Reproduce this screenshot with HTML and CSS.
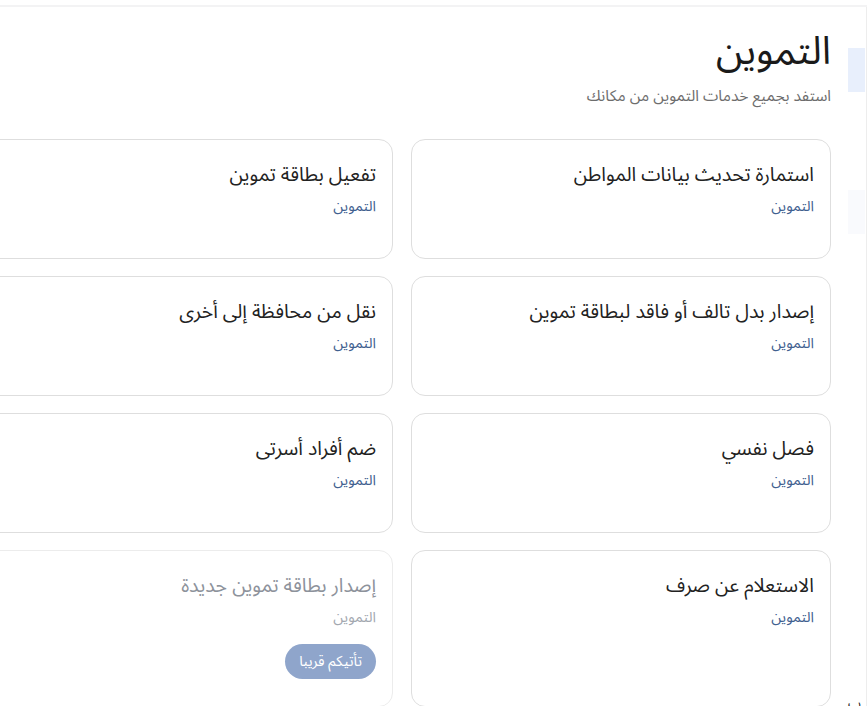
FILE: index.html
```html
<!DOCTYPE html>
<html lang="ar" dir="rtl">
<head>
<meta charset="utf-8">
<title>التموين</title>
<link rel="stylesheet" href="styles.css">
</head>
<body>
<div class="top-bar"></div>
<div class="layout">
  <aside class="sidebar">
    <div class="side-item active"></div>
    <div class="side-item faint"></div>
    <div class="side-spacer"></div>
    <div class="side-foot">ب</div>
  </aside>
  <main class="main">
    <h1 class="page-title">التموين</h1>
    <p class="page-sub">استفد بجميع خدمات التموين من مكانك</p>
    <div class="grid">
      <div class="card">
        <div class="card-title">استمارة تحديث بيانات المواطن</div>
        <div class="card-cat">التموين</div>
      </div>
      <div class="card">
        <div class="card-title">تفعيل بطاقة تموين</div>
        <div class="card-cat">التموين</div>
      </div>
      <div class="card">
        <div class="card-title">إصدار بدل تالف أو فاقد لبطاقة تموين</div>
        <div class="card-cat">التموين</div>
      </div>
      <div class="card">
        <div class="card-title">نقل من محافظة إلى أخرى</div>
        <div class="card-cat">التموين</div>
      </div>
      <div class="card">
        <div class="card-title">فصل نفسي</div>
        <div class="card-cat">التموين</div>
      </div>
      <div class="card">
        <div class="card-title">ضم أفراد أسرتى</div>
        <div class="card-cat">التموين</div>
      </div>
      <div class="card">
        <div class="card-title">الاستعلام عن صرف</div>
        <div class="card-cat">التموين</div>
      </div>
      <div class="card disabled">
        <div class="card-title">إصدار بطاقة تموين جديدة</div>
        <div class="card-cat">التموين</div>
        <span class="soon">تأتيكم قريبا</span>
      </div>
    </div>
  </main>
</div>
</body>
</html>
```
FILE: styles.css
```css
html, body {
  margin: 0;
  padding: 0;
  background: #ffffff;
}
body {
  font-family: "Noto Sans Arabic", "Noto Sans", "DejaVu Sans", sans-serif;
  color: #1f1f1f;
  overflow: hidden;
  height: 706px;
}
.top-bar {
  height: 5px;
  border-bottom: 2px solid #f3f3f4;
}
.layout {
  display: flex;
  height: 699px;
}
.sidebar {
  flex: 0 0 19px;
  border-right: 1px solid #ededed;
  display: flex;
  flex-direction: column;
  padding-top: 41px;
  box-sizing: border-box;
}
.side-item {
  height: 44px;
  margin-right: 1px;
}
.side-item.active {
  background: #e8effc;
}
.side-item.faint {
  margin-top: 98px;
  background: #f9fafd;
}
.side-spacer {
  flex: 1;
}
.side-foot {
  font-size: 13px;
  line-height: 16px;
  color: #222;
  margin-right: 1px;
  text-align: left;
  margin-bottom: -6px;
}
.main {
  flex: 1;
  min-width: 0;
  overflow: hidden;
  padding-right: 17px;
  padding-top: 22px;
}
.page-title {
  margin: 0;
  font-size: 39px;
  font-weight: 400;
  line-height: 46px;
  color: #1a1a1a;
}
.page-sub {
  margin: 10px 0 0;
  font-size: 15.5px;
  line-height: 22px;
  color: #6d6d6d;
}
.grid {
  margin-top: 32px;
  display: grid;
  grid-template-columns: 420px 420px;
  gap: 17px 18px;
}
.card {
  box-sizing: border-box;
  min-height: 120px;
  border: 1px solid #dedede;
  border-radius: 14px;
  padding: 19px 16px 25px;
  background: #fff;
}
.card-title {
  font-size: 19.5px;
  line-height: 32px;
  color: #222222;
}
.card-cat {
  margin-top: 5px;
  font-size: 14.5px;
  line-height: 22px;
  color: #41608f;
}
.card.disabled {
  border-color: #ececec;
  padding-bottom: 27px;
}
.card.disabled .card-title {
  color: #8d929b;
}
.card.disabled .card-cat {
  color: #a3a8b0;
}
.soon {
  display: inline-block;
  margin-top: 15px;
  height: 35px;
  line-height: 35px;
  padding: 0 14px;
  border-radius: 18px;
  background: #8fa5cb;
  color: #ffffff;
  font-size: 14.5px;
}
```
